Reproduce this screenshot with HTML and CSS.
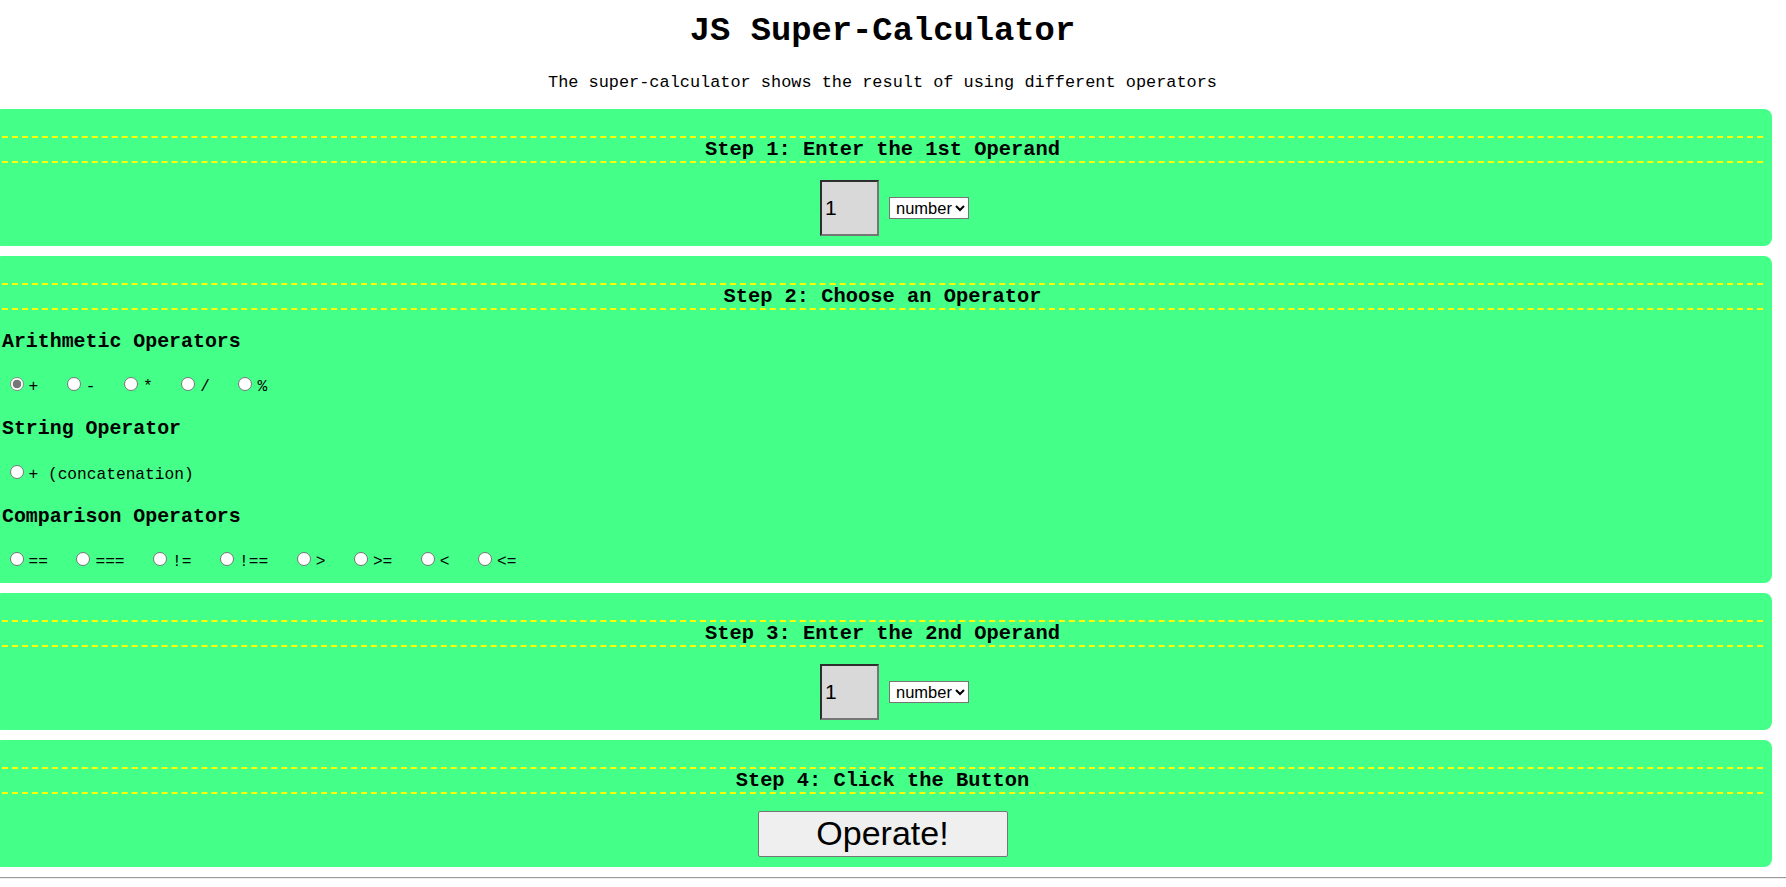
FILE: index.html
```html
<!DOCTYPE html>
<html lang="en">
<head>
<meta charset="utf-8">
<title>JS Super-Calculator</title>
<link rel="stylesheet" href="styles.css">
</head>
<body>
<div class="page">
  <h1 class="title">JS Super-Calculator</h1>
  <p class="intro">The super-calculator shows the result of using different operators</p>

  <section class="step">
    <h2 class="step-title">Step 1: Enter the 1st Operand</h2>
    <div class="operand">
      <input class="operand-input" type="text" value="1">
      <select class="operand-type">
        <option>number</option>
        <option>string</option>
      </select>
    </div>
  </section>

  <section class="step step-ops">
    <h2 class="step-title">Step 2: Choose an Operator</h2>

    <h3 class="group-title group-first">Arithmetic Operators</h3>
    <div class="opt-row">
      <label class="opt"><input type="radio" name="op" checked>+</label>
      <label class="opt"><input type="radio" name="op">-</label>
      <label class="opt"><input type="radio" name="op">*</label>
      <label class="opt"><input type="radio" name="op">/</label>
      <label class="opt"><input type="radio" name="op">%</label>
    </div>

    <h3 class="group-title">String Operator</h3>
    <div class="opt-row">
      <label class="opt"><input type="radio" name="op">+ (concatenation)</label>
    </div>

    <h3 class="group-title">Comparison Operators</h3>
    <div class="opt-row">
      <label class="opt"><input type="radio" name="op">==</label>
      <label class="opt"><input type="radio" name="op">===</label>
      <label class="opt"><input type="radio" name="op">!=</label>
      <label class="opt"><input type="radio" name="op">!==</label>
      <label class="opt"><input type="radio" name="op">&gt;</label>
      <label class="opt"><input type="radio" name="op">&gt;=</label>
      <label class="opt"><input type="radio" name="op">&lt;</label>
      <label class="opt"><input type="radio" name="op">&lt;=</label>
    </div>
  </section>

  <section class="step">
    <h2 class="step-title">Step 3: Enter the 2nd Operand</h2>
    <div class="operand">
      <input class="operand-input" type="text" value="1">
      <select class="operand-type">
        <option>number</option>
        <option>string</option>
      </select>
    </div>
  </section>

  <section class="step step-action">
    <h2 class="step-title">Step 4: Click the Button</h2>
    <div class="action">
      <button class="operate" type="button">Operate!</button>
    </div>
  </section>
</div>
<hr class="rule">
</body>
</html>
```

FILE: styles.css
```css
html, body {
  margin: 0;
  padding: 0;
  background: #ffffff;
  color: #000000;
  overflow: hidden;
}

body {
  font-family: "Liberation Mono", "Courier New", monospace;
}

.page {
  margin-left: 2px;
  width: 1761px;
}

.title {
  margin: 0;
  padding-top: 10.5px;
  font-size: 33.8px;
  line-height: 40px;
  font-weight: bold;
  text-align: center;
}

.intro {
  margin: 22px 0 16.5px;
  font-size: 16.9px;
  line-height: 20px;
  text-align: center;
}

.step {
  background: #44ff88;
  border-radius: 8px;
  margin: 0 -9px 10px -8px;
  padding: 26.5px 9px 10.5px 8px;
}

.step-title {
  margin: 0;
  border-top: 2px dashed #ffff00;
  border-bottom: 2px dashed #ffff00;
  padding-top: 1px;
  font-size: 20.4px;
  line-height: 22px;
  font-weight: bold;
  text-align: center;
}

.operand {
  display: flex;
  justify-content: center;
  align-items: center;
  gap: 10px;
  margin-top: 17px;
  padding-left: 24px;
}

.operand-input {
  box-sizing: border-box;
  width: 59px;
  height: 56px;
  margin: 0;
  padding: 0 3px;
  border: 2px solid;
  border-color: #2e2e2e #767676 #767676 #2e2e2e;
  background: #d9d9d9;
  font-family: "Liberation Sans", Arial, sans-serif;
  font-size: 21px;
  color: #000;
}

.operand-type {
  box-sizing: border-box;
  width: 80px;
  height: 22px;
  margin: 0;
  padding: 0 0 0 2px;
  font-family: "Liberation Sans", Arial, sans-serif;
  font-size: 16.5px;
  background: #fff;
  color: #000;
  border: 1px solid #767676;
}

.step-ops {
  padding-bottom: 9px;
}

.group-title {
  margin: 18px 0 0;
  font-size: 19.9px;
  line-height: 24px;
  font-weight: bold;
}

.group-first {
  margin-top: 20.5px;
}

.opt-row {
  display: flex;
  align-items: baseline;
  gap: 21px;
  margin-top: 21.4px;
  font-size: 16.2px;
  line-height: 24px;
  white-space: pre;
}

.opt input {
  appearance: none;
  -webkit-appearance: none;
  box-sizing: border-box;
  width: 14px;
  height: 14px;
  margin: 0 5px 0 7.5px;
  border: 1px solid #767676;
  border-radius: 50%;
  background: #ffffff;
  vertical-align: baseline;
}

.opt input:checked {
  border-color: #8a8a8a;
  background: radial-gradient(circle, #767676 0 4px, #ffffff 4.6px 100%);
}

.step-action {
  padding-bottom: 10px;
}

.action {
  display: flex;
  justify-content: center;
  margin-top: 17.3px;
}

.operate {
  box-sizing: border-box;
  width: 250px;
  height: 46px;
  margin: 0;
  padding: 0;
  border: 1px solid #767676;
  border-radius: 2px;
  background: #efefef;
  font-family: "Liberation Sans", Arial, sans-serif;
  font-size: 34px;
  color: #000;
}

.rule {
  margin: 10px 0 0;
  border: 0;
  border-top: 1px solid #9a9a9a;
  border-bottom: 1px solid #eeeeee;
  height: 0;
}
```
